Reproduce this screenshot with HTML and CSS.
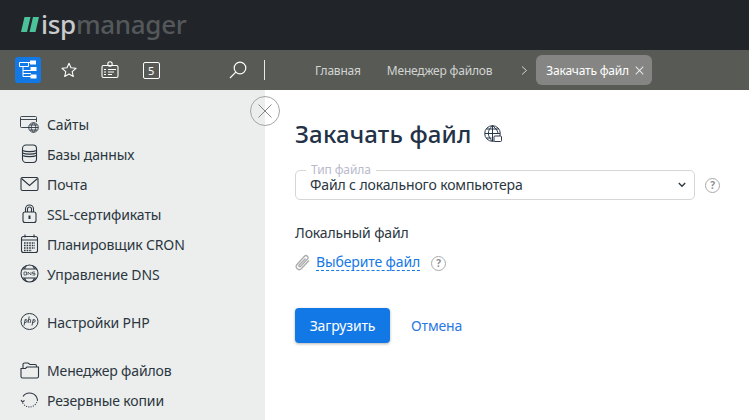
FILE: index.html
```html
<!DOCTYPE html>
<html lang="ru">
<head>
<meta charset="utf-8">
<title>Закачать файл</title>
<link rel="stylesheet" href="styles.css">
</head>
<body>
<header class="brand">
  <svg class="brand-mark" width="18" height="15" viewBox="0 0 18 15"><path d="M3.500 0H9.500L6 15H0zM12 0H18L14.500 15H8.500z" fill="#4cc29a"/></svg>
  <span class="brand-name"><span class="brand-isp">isp</span>manager</span>
</header>
<nav class="toolbar">
  <div class="tools">
    <button class="tool tool-active" aria-label="Дерево">
      <svg width="22" height="22" viewBox="0 0 22 22" fill="none" stroke="#fff"><path d="M2.500 3.500h12M2.500 3.500V7.500h9V3.500M6 7.500v10h8M6 11.500h8M6 14.500h8"/><rect x="13.500" y="2" width="5" height="3" fill="#fff"/><rect x="14" y="8.500" width="5" height="3" fill="#fff"/><rect x="14" y="16" width="5" height="3" fill="#fff"/></svg>
    </button>
    <button class="tool" aria-label="Избранное">
      <svg width="16" height="16" viewBox="0 0 16 16" fill="none" stroke="#fff" stroke-width="1.100" stroke-linejoin="round"><path d="M8 1.200l2 4.600 5 .5-3.800 3.300 1.100 4.900L8 12l-4.300 2.500 1.100-4.900L1 6.300l5-.5z"/></svg>
    </button>
    <button class="tool" aria-label="Задачи">
      <svg width="18" height="18" viewBox="0 0 18 18" fill="none" stroke="#fff" stroke-width="1.100"><rect x="1" y="4.500" width="16" height="12" rx="1.500"/><circle cx="9" cy="3" r="2.200"/><path d="M3 8.500h2M7 8.500h8M3 11h2M7 11h6M3 13.500h2M7 13.500h4"/></svg>
    </button>
    <button class="tool" aria-label="Уведомления"><span class="counter">5</span></button>
  </div>
  <button class="search" aria-label="Поиск">
    <svg width="18" height="18" viewBox="0 0 18 18" fill="none" stroke="#fff" stroke-width="1.200"><circle cx="11" cy="7" r="5.800"/><path d="M6.800 11.200L1 17"/></svg>
  </button>
  <span class="divider"></span>
  <div class="crumbs">
    <a class="crumb crumb-home">Главная</a>
    <a class="crumb crumb-files">Менеджер файлов</a>
    <span class="chevron">
      <svg width="7" height="9" viewBox="0 0 7 9" fill="none" stroke="#d0d2cf"><path d="M1 .5l4.500 4L1 8.500"/></svg>
    </span>
    <span class="tab">Закачать файл
      <svg width="9" height="9" viewBox="0 0 9 9" stroke="#e4e5e3" stroke-width="1.100"><path d="M.7.7l7.600 7.600M8.300.7L.7 8.300"/></svg>
    </span>
  </div>
</nav>
<div class="body">
  <aside class="side">
    <ul class="menu">
      <li class="item"><svg width="20" height="20" viewBox="0 0 20 20" fill="none" stroke="#2b3640" stroke-width=".9"><path d="M9 13.500H1.500a1 1 0 0 1-1-1v-9a1 1 0 0 1 1-1h14a1 1 0 0 1 1 1V8M.5 5.500h16"/><circle cx="13.500" cy="13.500" r="4.800"/><path d="M8.700 13.500h9.600M13.500 8.700c-3 3-3 6.600 0 9.600 3-3 3-6.600 0-9.600M9.800 11h7.400M9.800 16h7.400"/></svg>Сайты</li>
      <li class="item"><svg width="20" height="20" viewBox="0 0 20 20" fill="none" stroke="#2b3640" stroke-width="1.100"><rect x="2.500" y="1" width="14" height="17.500" rx="3.500"/><path d="M2.500 6.500c3 1.500 11 1.500 14 0M2.500 9c3 1.500 11 1.500 14 0M2.500 11.500c3 1.500 11 1.500 14 0"/></svg>Базы данных</li>
      <li class="item"><svg width="20" height="20" viewBox="0 0 20 20" fill="none" stroke="#2b3640" stroke-width="1.100"><rect x="1" y="3.500" width="17" height="13" rx="1.500"/><path d="M1.500 4.500l8 7 8-7"/></svg>Почта</li>
      <li class="item"><svg width="20" height="20" viewBox="0 0 20 20" fill="none" stroke="#2b3640" stroke-width="1.100"><rect x="3" y="8" width="13" height="10.500" rx="2"/><path d="M5.500 8V5a4 4 0 0 1 8 0v3M7.500 8V5a2 2 0 0 1 4 0v3"/><path d="M9.500 11.500v3.500" stroke-width="2"/></svg>SSL-сертификаты</li>
      <li class="item"><svg width="20" height="20" viewBox="0 0 20 20" fill="none" stroke="#2b3640" stroke-width="1.100"><rect x="1.500" y="2.500" width="16" height="16" rx="2"/><path d="M5 .5v3M14 .5v3M1.500 6h16"/><path d="M4 9h11M4 11.500h11M4 14h11M4 16.500h8" stroke-width="1.600" stroke-dasharray="1.600 1"/></svg>Планировщик CRON</li>
      <li class="item"><svg width="20" height="20" viewBox="0 0 20 20" fill="none" stroke="#2b3640" stroke-width="1.100"><circle cx="9.500" cy="9.500" r="8.500"/><path d="M2.500 5h14M2.500 14h14M6.500 1.500c-1.500 2-2 3-2 3.500M12.500 1.500c1.500 2 2 3 2 3.500M6.500 17.500c-1.500-2-2-3-2-3.500M12.500 17.500c1.500-2 2-3 2-3.500"/><path d="M4 8h2.500v3H4zM8 11V8l3 3V8M15 8h-2.500v1.500H15V11h-2.500" stroke-width=".7"/></svg>Управление DNS</li>
    </ul>
    <ul class="menu">
      <li class="item"><svg width="20" height="20" viewBox="0 0 20 20" fill="none" stroke="#2b3640"><ellipse cx="9.500" cy="9.500" rx="8.500" ry="8"/><path d="M4 13.500l1.300-6.300M5 8.500c1-1.500 2.500-1 2 .7-.4 1.500-1.800 1.600-2.500 1M8 11l1.200-6.500M8.800 8c1-1 2.300-.8 1.800.8l-.6 2.200M12 13.500l1.300-6.300M13 8.500c1-1.500 2.500-1 2 .7-.4 1.500-1.800 1.600-2.500 1" stroke-width=".9"/></svg>Настройки PHP</li>
    </ul>
    <ul class="menu">
      <li class="item"><svg width="20" height="20" viewBox="0 0 20 20" fill="none" stroke="#2b3640" stroke-width="1.100"><path d="M1 8.500h4.500l1.500 -1.500h11.500v9.500a1.500 1.500 0 0 1-1.500 1.500H2.500A1.500 1.500 0 0 1 1 16.500z"/><path d="M3 8V4.500A1.500 1.500 0 0 1 4.500 3H8l2 1.500h5A1.500 1.500 0 0 1 16.500 6v1"/></svg>Менеджер файлов</li>
      <li class="item"><svg width="20" height="20" viewBox="0 0 20 20" fill="none" stroke="#2b3640" stroke-width="1.100"><path d="M3 6.500A8 8 0 0 1 17.500 10"/><path d="M17.500 10A8 8 0 0 1 2 11.500" stroke-dasharray="1 1.300"/><path d="M1 10l1.500 2 2-1.500"/></svg>Резервные копии</li>
    </ul>
  </aside>
  <button class="collapse" aria-label="Свернуть">
    <svg width="14" height="14" viewBox="0 0 14 14" stroke="#85888a"><path d="M.5.500l13 13M13.500.5l-13 13"/></svg>
  </button>
  <main class="main">
    <h1 class="title">Закачать файл
      <svg width="18" height="18" viewBox="0 0 18 18" fill="none" stroke="#28374a"><circle cx="8.500" cy="8.500" r="7.800"/><path d="M1 8.500h15M8.500.7v15.500M2.500 4h12M2.500 13h5M8.500.7c-6 5-5 11 0 15.500M8.500.7c4 3 5.500 6 5.500 8"/><rect x="10" y="11" width="7.500" height="5.500" rx="1" fill="#fff"/></svg>
    </h1>
    <div class="field-row">
      <label class="select">
        <span class="legend">Тип файла</span>
        <span class="select-value">Файл с локального компьютера</span>
        <svg width="8" height="6" viewBox="0 0 8 6" fill="none" stroke="#2b3640" stroke-width="1.300"><path d="M.8 1l3.200 3.300L7.200 1"/></svg>
      </label>
      <span class="hint">?</span>
    </div>
    <div class="label">Локальный файл</div>
    <div class="file-row">
      <svg width="16" height="17" viewBox="0 0 16 17" fill="none" stroke="#a9abaa" stroke-width="1.300"><path d="M14 6.500L6.500 14.500a3 3 0 0 1-4.500-4L9.500 2.300a2 2 0 0 1 3 2.700L5.500 12.500a1 1 0 0 1-1.500-1.300L10.500 4.500"/></svg>
      <a class="file-link">Выберите файл</a>
      <span class="hint">?</span>
    </div>
    <div class="actions">
      <button class="primary">Загрузить</button>
      <a class="cancel">Отмена</a>
    </div>
  </main>
</div>
</body>
</html>
```
FILE: styles.css
```css
* { box-sizing: border-box; }
html, body { margin: 0; height: 100%; overflow: hidden; }
body {
  display: flex;
  flex-direction: column;
  font-family: "Noto Sans", sans-serif;
  font-size: 14px;
  letter-spacing: -.13px;
  color: #2b3640;
  background: #fff;
}
button { font: inherit; letter-spacing: inherit; border: 0; background: none; padding: 0; }
ul { list-style: none; margin: 0; padding: 0; }

.brand {
  height: 50px;
  flex: none;
  background: #212529;
  display: flex;
  align-items: center;
  padding-left: 21px;
  gap: 2px;
}
.brand-mark { margin-top: -1px; }
.brand-name {
  font-size: 26px;
  font-weight: 500;
  line-height: 34px;
  color: #55585a;
  letter-spacing: -.3px;
  margin-top: -3px;
}
.brand-isp { color: #c9cbcc; }

.toolbar {
  height: 40px;
  flex: none;
  background: #585a56;
  display: flex;
  align-items: center;
  padding-left: 15px;
}
.tools { display: flex; align-items: center; gap: 15px; width: 212px; }
.tool {
  width: 26px;
  height: 26px;
  display: flex;
  align-items: center;
  justify-content: center;
  border-radius: 3px;
}
.tool-active { background: #1278e6; }
.counter {
  width: 17px;
  height: 17px;
  border: 1px solid #fff;
  border-radius: 2px;
  color: #fff;
  font-size: 11px;
  line-height: 15px;
  text-align: center;
}
.search { width: 18px; height: 18px; margin-left: 2px; display: flex; }
.divider { width: 1px; height: 20px; background: #e8e9e7; margin-left: 17px; }
.crumbs { display: flex; align-items: center; margin-left: 50px; font-size: 12px; letter-spacing: -.2px; }
.crumb { color: #d2d4d1; }
.crumb-files { margin-left: 26px; }
.chevron { margin-left: 29px; display: flex; }
.tab {
  margin-left: 8px;
  height: 30px;
  padding: 0 8px 0 10px;
  border-radius: 6px;
  background: #858683;
  color: #fff;
  display: flex;
  align-items: center;
  gap: 6px;
}

.body { flex: 1; display: flex; position: relative; min-height: 0; }
.side {
  width: 265px;
  flex: none;
  background: #eceeed;
  padding: 19px 0 0 20px;
  overflow: hidden;
  display: flex;
  flex-direction: column;
  gap: 18px;
}
.item {
  height: 30px;
  display: flex;
  align-items: center;
  gap: 7px;
  white-space: nowrap;
}
.collapse {
  position: absolute;
  left: 250px;
  top: 6px;
  width: 30px;
  height: 30px;
  border-radius: 50%;
  border: 1px solid #a4a6a6;
  display: flex;
  align-items: center;
  justify-content: center;
}

.main { flex: 1; padding: 28px 0 0 30px; min-width: 0; }
.title {
  margin: 0;
  font-size: 24px;
  line-height: 32px;
  font-weight: 500;
  letter-spacing: .15px;
  color: #233246;
  display: flex;
  align-items: center;
  gap: 12px;
}
.field-row { display: flex; align-items: center; gap: 10px; margin-top: 20px; }
.select {
  position: relative;
  width: 400px;
  height: 30px;
  border: 1px solid #d5d7d7;
  border-radius: 5px;
  display: flex;
  align-items: center;
  justify-content: space-between;
  padding: 0 8px 0 14px;
}
.select-value { line-height: 15px; margin-bottom: 2px; }
.legend {
  position: absolute;
  left: 10px;
  top: -7px;
  padding: 0 5px;
  background: #fff;
  font-size: 12px;
  line-height: 12px;
  color: #b9bacb;
}
.hint {
  width: 15px;
  height: 15px;
  border: 1px solid #a8aaaa;
  border-radius: 50%;
  color: #8d8f8f;
  font-size: 10px;
  font-weight: 700;
  line-height: 13px;
  text-align: center;
  flex: none;
}
.label { margin-top: 23px; line-height: 20px; }
.file-row { display: flex; align-items: center; margin-top: 9px; height: 20px; }
.file-link {
  margin-left: 5px;
  color: #1478e6;
  line-height: 16px;
  border-bottom: 1px dashed #1478e6;
}
.file-row .hint { margin-left: 11px; margin-top: 2px; }
.actions { display: flex; align-items: center; margin-top: 36px; gap: 21px; }
.primary {
  width: 95px;
  height: 35px;
  border-radius: 4px;
  background: #1278e6;
  color: #fff;
  box-shadow: 0 1px 3px rgba(0,0,0,.3);
}
.cancel { color: #2a78e4; }
```
